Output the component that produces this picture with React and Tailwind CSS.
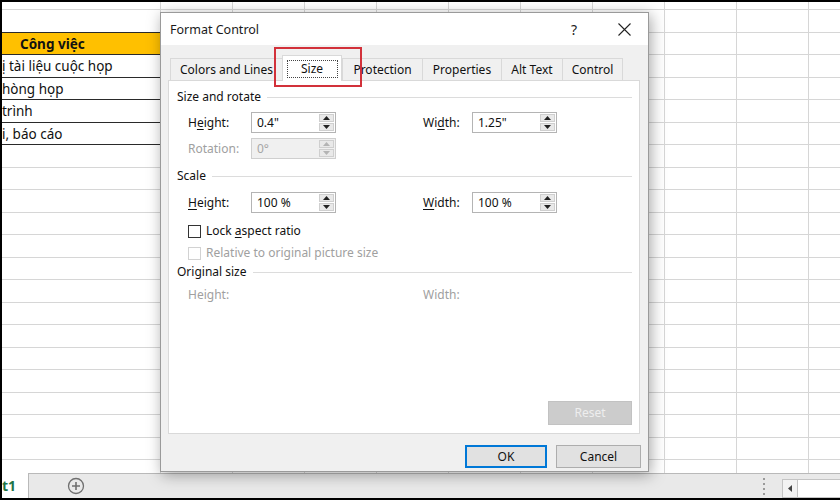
import React from "react";

const ui = { fontFamily: '"Noto Sans", "Segoe UI", Arial, sans-serif' };

const cols = Array.from({ length: 9 });
const rows = Array.from({ length: 21 });

const colA = {
  1: { text: "Công việc", head: true },
  2: { text: "ị tài liệu cuộc họp" },
  3: { text: "hòng họp" },
  4: { text: "trình" },
  5: { text: "i, báo cáo" },
};

function Arrow({ up, color }) {
  return (
    <svg width="7" height="4" viewBox="0 0 7 4">
      {up ? <path d="M0 4 L3.5 0 L7 4 Z" fill={color} /> : <path d="M0 0 L3.5 4 L7 0 Z" fill={color} />}
    </svg>
  );
}

function Spin({ value, disabled }) {
  const c = disabled ? "#b4b4b4" : "#222";
  return (
    <div
      className={`w-[85px] h-[21px] flex border ${
        disabled ? "border-[#cfcfcf] bg-[#f0f0f0] text-[#a6a6a6]" : "border-[#b4b4b4] bg-white text-[#111]"
      }`}
    >
      <div className="flex-1 flex items-center pl-[5px] text-[12px]">{value}</div>
      <div className="w-[17px] flex flex-col p-px gap-px">
        <div className="flex-1 flex items-center justify-center bg-[#e9e9e9] border border-[#cfcfcf]">
          <Arrow up color={c} />
        </div>
        <div className="flex-1 flex items-center justify-center bg-[#e9e9e9] border border-[#cfcfcf]">
          <Arrow color={c} />
        </div>
      </div>
    </div>
  );
}

function Section({ title, className }) {
  return (
    <div className={`flex items-center h-[16px] text-[12px] text-[#111] ${className}`}>
      <span>{title}</span>
      <div className="flex-1 h-px bg-[#dcdcdc] ml-[6px]" />
    </div>
  );
}

function Tab({ label, w, active, last }) {
  if (active) {
    return (
      <div
        className={`${w} h-[26px] mb-[-1px] relative z-10 bg-white border border-b-0 border-[#d9d9d9] flex items-center justify-center`}
      >
        <span className="w-[51px] h-[18px] flex items-center justify-center border border-dotted border-[#444]">
          {label}
        </span>
      </div>
    );
  }
  return (
    <div
      className={`${w} h-[22px] bg-[#f0f0f0] border-t border-l ${last ? "border-r" : ""} border-[#d9d9d9] flex items-center justify-center`}
    >
      {label}
    </div>
  );
}

export default function App() {
  return (
    <div className="w-[840px] h-[500px] bg-black pl-[2px] py-[2px] overflow-hidden relative" style={ui}>
      <div className="w-full h-full bg-white flex flex-col">
        {/* Sheet */}
        <div className="flex-1 overflow-hidden flex flex-col">
          <div className="h-[8px] shrink-0 flex border-b border-[#d6d6d6]">
            <div className="w-[158px] shrink-0" />
            {cols.map((_, i) => (
              <div key={i} className="w-[72px] shrink-0 border-l border-[#d6d6d6]" />
            ))}
            <div className="flex-1 border-l border-[#d6d6d6]" />
          </div>
          {rows.map((_, r) => {
            const cell = colA[r];
            const dark = r <= 5;
            return (
              <div key={r} className="h-[22.5px] shrink-0 flex">
                <div
                  className={`w-[158px] shrink-0 flex items-center text-[13.5px] text-[#111] whitespace-nowrap border-b pt-px ${
                    dark ? "border-[#2a2a2a]" : "border-[#d6d6d6]"
                  } ${cell && cell.head ? "bg-[#ffc000] font-bold pl-[18px]" : ""}`}
                >
                  {cell ? cell.text : ""}
                </div>
                {cols.map((_, i) => (
                  <div key={i} className="w-[72px] shrink-0 border-l border-b border-[#d6d6d6]" />
                ))}
                <div className="flex-1 border-l border-b border-[#d6d6d6]" />
              </div>
            );
          })}
        </div>

        {/* Sheet tab bar */}
        <div className="h-[25px] shrink-0 flex bg-[#e9e9e9]">
          <div className="w-[26px] bg-white flex items-center text-[14px] font-bold text-[#217346]">t1</div>
          <div className="flex-1 flex items-center border-t border-l border-[#b9b9b9]">
            <svg width="18" height="18" viewBox="0 0 18 18" className="ml-[38px]">
              <circle cx="9" cy="9" r="7.5" fill="none" stroke="#6f6f6f" strokeWidth="1.3" />
              <path d="M9 5 V13 M5 9 H13" stroke="#6f6f6f" strokeWidth="1.6" />
            </svg>
            <div className="ml-auto flex flex-col gap-[3px] mr-[17px]">
              <span className="w-[2px] h-[2px] bg-[#9a9a9a]" />
              <span className="w-[2px] h-[2px] bg-[#9a9a9a]" />
              <span className="w-[2px] h-[2px] bg-[#9a9a9a]" />
              <span className="w-[2px] h-[2px] bg-[#9a9a9a]" />
            </div>
            <div className="h-[19px] mt-[5px] flex self-start">
              <div className="w-[16px] border border-[#c4c4c4] bg-[#f3f3f3] flex items-center justify-center">
                <svg width="4" height="7" viewBox="0 0 4 7">
                  <path d="M4 0 L0 3.5 L4 7 Z" fill="#444" />
                </svg>
              </div>
              <div className="w-[42px] bg-white border-t border-b border-[#c4c4c4]" />
            </div>
          </div>
        </div>
      </div>

      {/* Dialog */}
      <div className="absolute left-[160px] top-[12px] w-[489px] h-[460px] border border-[#9a9a9a] bg-[#f0f0f0] flex flex-col shadow-[2px_3px_14px_rgba(0,0,0,0.35)] text-[12px] text-[#111]">
        <div className="h-[32px] bg-white flex items-center">
          <span className="pl-[9px] text-[12.5px] text-[#1a1a1a] pt-[2px]">Format Control</span>
          <div className="ml-auto flex items-center pr-px">
            <div className="w-[46px] h-[32px] flex items-center justify-center text-[14px] text-[#222]">?</div>
            <div className="w-[46px] h-[32px] ml-[4px] flex items-center justify-center">
              <svg width="13" height="13" viewBox="0 0 13 13">
                <path d="M0.5 0.5 L12.5 12.5 M12.5 0.5 L0.5 12.5" stroke="#222" strokeWidth="1.1" />
              </svg>
            </div>
          </div>
        </div>

        <div className="pt-[10px] flex flex-col">
          <div className="h-[25px] flex items-end pl-[9px]">
            <Tab label="Colors and Lines" w="w-[112px]" />
            <Tab label="Size" w="w-[60px]" active />
            <Tab label="Protection" w="w-[80px]" />
            <Tab label="Properties" w="w-[79px]" />
            <Tab label="Alt Text" w="w-[61px]" />
            <Tab label="Control" w="w-[61px]" last />
          </div>

          <div className="ml-[7px] w-[472px] h-[354px] bg-white border border-[#d9d9d9] pl-[8px] pr-[7px] pt-[8px] pb-[8px] flex flex-col">
            <Section title="Size and rotate" />
            <div className="mt-[7px] h-[21px] flex items-center pl-[11px]">
              <span className="w-[63px]">
                H<span className="underline underline-offset-2">e</span>ight:
              </span>
              <Spin value={'0.4"'} />
              <span className="w-[49px] ml-[87px]">
                Wi<span className="underline underline-offset-2">d</span>th:
              </span>
              <Spin value={'1.25"'} />
            </div>
            <div className="mt-[5px] h-[21px] flex items-center pl-[11px]">
              <span className="w-[63px] text-[#a0a0a0]">Rotation:</span>
              <Spin value="0°" disabled />
            </div>

            <Section title="Scale" className="mt-[9px]" />
            <div className="mt-[8px] h-[21px] flex items-center pl-[11px]">
              <span className="w-[63px]">
                <span className="underline underline-offset-2">H</span>eight:
              </span>
              <Spin value="100 %" />
              <span className="w-[49px] ml-[87px]">
                <span className="underline underline-offset-2">W</span>idth:
              </span>
              <Spin value="100 %" />
            </div>
            <div className="mt-[10px] h-[16px] flex items-center pl-[11px]">
              <span className="w-[13px] h-[13px] border border-[#333] bg-white" />
              <span className="ml-[5px]">
                Lock <span className="underline underline-offset-2">a</span>spect ratio
              </span>
            </div>
            <div className="mt-[6px] h-[16px] flex items-center pl-[11px] text-[#a0a0a0]">
              <span className="w-[13px] h-[13px] border border-[#d2d2d2] bg-white" />
              <span className="ml-[5px]">Relative to original picture size</span>
            </div>

            <Section title="Original size" className="mt-[3px]" />
            <div className="mt-[7px] h-[16px] flex items-center pl-[11px] text-[#a0a0a0]">
              <span className="w-[235px]">Height:</span>
              <span>Width:</span>
            </div>

            <div className="flex-1" />
            <div className="flex justify-end">
              <div className="w-[84px] h-[24px] bg-[#cccccc] border border-[#c2c2c2] flex items-center justify-center text-[#eeeeee]">
                Reset
              </div>
            </div>
          </div>

          <div className="mt-[11px] flex justify-end pr-[7px] gap-[9px]">
            <div className="w-[82px] h-[23px] bg-[#e1e1e1] border-2 border-[#0078d7] flex items-center justify-center">
              OK
            </div>
            <div className="w-[85px] h-[23px] bg-[#e1e1e1] border border-[#adadad] flex items-center justify-center">
              Cancel
            </div>
          </div>
        </div>

        {/* annotation box */}
        <div className="absolute left-[113px] top-[34px] w-[88px] h-[40px] border-2 border-[#d2313a] z-20" />
      </div>
    </div>
  );
}
